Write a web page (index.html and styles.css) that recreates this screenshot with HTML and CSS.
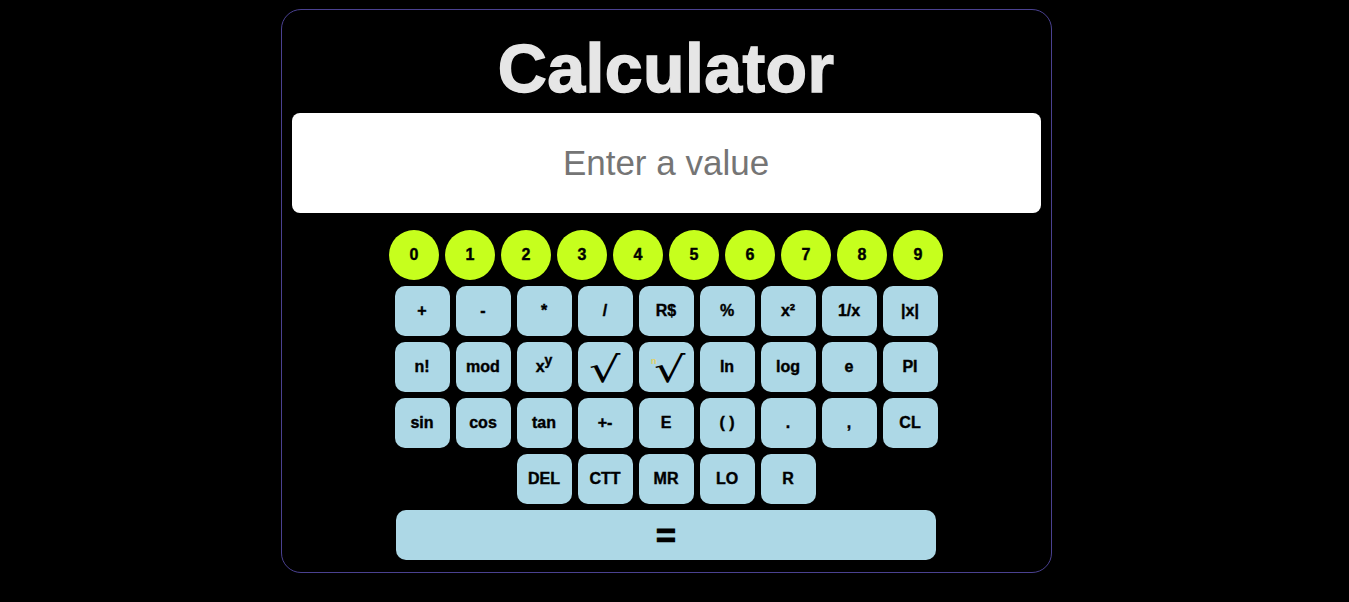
FILE: index.html
```html
<!DOCTYPE html>
<html lang="en">
<head>
<meta charset="utf-8">
<title>Calculator</title>
<link rel="stylesheet" href="styles.css">
</head>
<body>
<main class="calc">
  <h1 class="title">Calculator</h1>
  <input class="display" type="text" placeholder="Enter a value">
  <div class="pad">
    <div class="row">
      <button class="digit">0</button><button class="digit">1</button><button class="digit">2</button><button class="digit">3</button><button class="digit">4</button><button class="digit">5</button><button class="digit">6</button><button class="digit">7</button><button class="digit">8</button><button class="digit">9</button>
    </div>
    <div class="row">
      <button class="key">+</button><button class="key">-</button><button class="key">*</button><button class="key">/</button><button class="key">R$</button><button class="key">%</button><button class="key">x²</button><button class="key">1/x</button><button class="key">|x|</button>
    </div>
    <div class="row">
      <button class="key">n!</button><button class="key">mod</button><button class="key">x<sup class="sup">y</sup></button><button class="key root"><span class="rad">√</span></button><button class="key root"><span class="nth">n</span><span class="rad">√</span></button><button class="key">ln</button><button class="key">log</button><button class="key">e</button><button class="key">PI</button>
    </div>
    <div class="row">
      <button class="key">sin</button><button class="key">cos</button><button class="key">tan</button><button class="key">+-</button><button class="key">E</button><button class="key">( )</button><button class="key">.</button><button class="key">,</button><button class="key">CL</button>
    </div>
    <div class="row">
      <button class="key">DEL</button><button class="key">CTT</button><button class="key">MR</button><button class="key">LO</button><button class="key">R</button>
    </div>
    <div class="row">
      <button class="equals">=</button>
    </div>
  </div>
</main>
</body>
</html>
```
FILE: styles.css
```css
html, body {
  margin: 0;
  padding: 0;
  background: #000;
}
body {
  padding: 9px 17px 0 0;
  font-family: "Liberation Sans", Arial, sans-serif;
}
.calc {
  box-sizing: border-box;
  width: 771px;
  margin: 0 auto;
  border: 1px solid #4a4190;
  border-radius: 20px;
  padding: 0 10px 12px;
  display: flex;
  flex-direction: column;
  align-items: center;
}
.title {
  margin: 19px 0 6px;
  line-height: 78px;
  font-size: 68px;
  font-weight: 900;
  color: #e6e6e6;
  letter-spacing: 0.4px;
  -webkit-text-stroke: 1.4px #e6e6e6;
}
.display {
  box-sizing: border-box;
  width: 749px;
  height: 100px;
  border: none;
  border-radius: 8px;
  background: #fff;
  font-family: "Liberation Sans", Arial, sans-serif;
  font-size: 35px;
  text-align: center;
  outline: none;
  padding: 0;
}
.display::placeholder {
  color: #757575;
}
.pad {
  margin-top: 17px;
  display: flex;
  flex-direction: column;
  gap: 6px;
  align-items: center;
}
.row {
  display: flex;
  gap: 6px;
  justify-content: center;
}
button {
  font-family: "Liberation Sans", Arial, sans-serif;
  font-weight: bold;
  color: #000;
  border: none;
  padding: 0;
  cursor: pointer;
}
.digit {
  width: 50px;
  height: 50px;
  border-radius: 50%;
  background: #c6ff1d;
  font-size: 16px;
  -webkit-text-stroke: 0.4px #000;
}
.key {
  width: 55px;
  height: 50px;
  border-radius: 10px;
  background: #add8e6;
  font-size: 16px;
  -webkit-text-stroke: 0.4px #000;
}
.sup {
  font-size: 14px;
  vertical-align: 7px;
  line-height: 0;
}
.root {
  display: flex;
  align-items: center;
  justify-content: center;
  padding-top: 3px;
  -webkit-text-stroke: 0;
}
.rad {
  display: inline-block;
  font-family: "DejaVu Sans", sans-serif;
  font-size: 34px;
  font-weight: normal;
  line-height: 1;
  transform: scale(1.45, 1.05);
}
.nth {
  font-size: 9px;
  font-weight: bold;
  color: #e3cf60;
  align-self: flex-start;
  margin-top: 11px;
  margin-right: 3px;
}
.equals {
  width: 540px;
  height: 50px;
  border-radius: 10px;
  background: #add8e6;
  font-size: 34px;
  font-weight: 900;
  line-height: 1;
  -webkit-text-stroke: 1.2px #000;
}
```
